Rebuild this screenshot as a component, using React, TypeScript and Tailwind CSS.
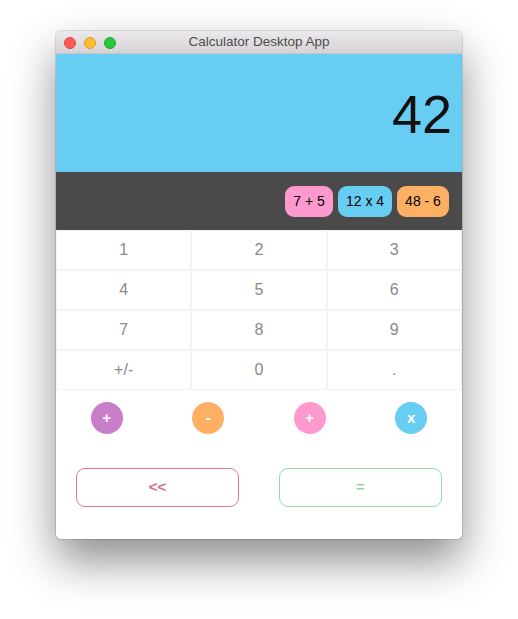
export default function App() {
  const keys = ["1", "2", "3", "4", "5", "6", "7", "8", "9", "+/-", "0", "."];
  const ops = [
    { label: "+", bg: "bg-[#c97ec9]" },
    { label: "-", bg: "bg-[#fdb064]" },
    { label: "+", bg: "bg-[#fd99cd]" },
    { label: "x", bg: "bg-[#67cdf1]" },
  ];

  return (
    <div className="min-h-[619px] bg-white flex justify-center pt-[31px] font-['Liberation_Sans',Arial,sans-serif]">
      <div className="w-[406px] h-[508px] rounded-[5px] overflow-hidden bg-white flex flex-col shadow-[0_0_0_1px_rgba(0,0,0,0.12),0_22px_45px_rgba(0,0,0,0.45)]">
        {/* Title bar */}
        <div className="relative h-[23px] bg-gradient-to-b from-[#ebe9eb] to-[#d5d3d5] border-b border-[#c8c6c8] flex items-center justify-center">
          <div className="absolute left-[8px] top-[6px] flex gap-[8px]">
            <span className="w-[12px] h-[12px] rounded-full bg-[#fc5b57] border border-[#e0443e]" />
            <span className="w-[12px] h-[12px] rounded-full bg-[#fdbc2e] border border-[#dea123]" />
            <span className="w-[12px] h-[12px] rounded-full bg-[#28c840] border border-[#1aab29]" />
          </div>
          <span className="text-[13.5px] text-[#4d4d4d]">Calculator Desktop App</span>
        </div>

        {/* Display */}
        <div className="h-[118px] bg-[#68cdf2] flex items-center justify-end pr-[10px]">
          <span className="text-[54px] leading-none text-[#111] mt-[2px]">42</span>
        </div>

        {/* History */}
        <div className="h-[58px] bg-[#4a4a4a] flex items-center justify-end gap-[5px] pr-[13px]">
          <span className="h-[31px] w-[48px] rounded-[9px] bg-[#fd99cd] text-[14px] text-black flex items-center justify-center">7 + 5</span>
          <span className="h-[31px] w-[54px] rounded-[9px] bg-[#68cdf2] text-[14px] text-black flex items-center justify-center">12 x 4</span>
          <span className="h-[31px] w-[52px] rounded-[9px] bg-[#fdb064] text-[14px] text-black flex items-center justify-center">48 - 6</span>
        </div>

        {/* Keypad */}
        <div className="grid grid-cols-3">
          {keys.map((k) => (
            <div
              key={k}
              className="h-[40px] border border-[#f3f3f3] flex items-center justify-center text-[16px] text-[#8a8a8a]"
            >
              {k}
            </div>
          ))}
        </div>

        {/* Operators */}
        <div className="grid grid-cols-4 h-[56px] items-center">
          {ops.map((o, i) => (
            <div key={i} className="flex justify-center">
              <span className={`w-[32px] h-[32px] rounded-full ${o.bg} text-white font-bold text-[15px] flex items-center justify-center`}>
                {o.label}
              </span>
            </div>
          ))}
        </div>

        {/* Actions */}
        <div className="grid grid-cols-2 mt-[22px]">
          <div className="px-[20px]">
            <div className="h-[39px] rounded-[9px] border border-[#de7a80] text-[#d8727a] font-bold text-[15px] flex items-center justify-center">
              &lt;&lt;
            </div>
          </div>
          <div className="px-[20px]">
            <div className="h-[39px] rounded-[9px] border border-[#9fd9a4] text-[#9ad59f] font-bold text-[15px] flex items-center justify-center">
              =
            </div>
          </div>
        </div>
      </div>
    </div>
  );
}
